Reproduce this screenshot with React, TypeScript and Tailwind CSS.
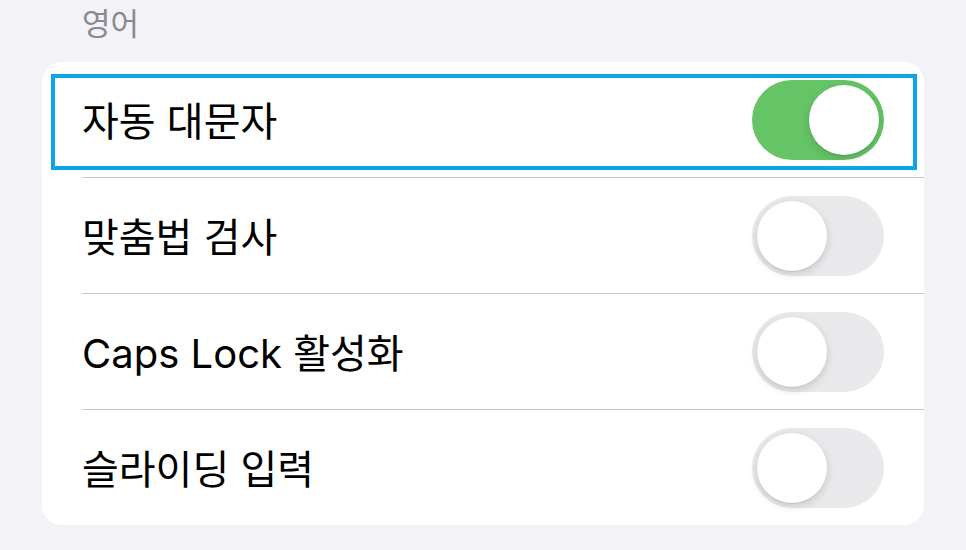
const rows = [
  { label: '자동 대문자', on: true },
  { label: '맞춤법 검사', on: false },
  { label: 'Caps Lock 활성화', on: false },
  { label: '슬라이딩 입력', on: false },
];

function Toggle({ on }: { on: boolean }) {
  return (
    <div
      className={`flex h-[80px] w-[132px] shrink-0 items-center rounded-full p-[5px] ${
        on ? 'justify-end bg-[#65c466]' : 'justify-start bg-[#e9e9eb]'
      }`}
    >
      <div className="h-[70px] w-[70px] rounded-full bg-white shadow-[0_3px_8px_rgba(0,0,0,0.15),0_1px_1px_rgba(0,0,0,0.06)]" />
    </div>
  );
}

export default function App() {
  return (
    <div
      className="h-[550px] w-[966px] overflow-hidden bg-[#f2f2f7]"
      style={{ fontFamily: 'Inter, "Noto Sans CJK KR", sans-serif' }}
    >
      <div className="h-[62px] pl-[82px] pt-[2px] text-[31px] leading-[44px] text-[#8a8a8e]">영어</div>
      <div className="relative ml-[42px] w-[882px] rounded-[20px] bg-white">
        {rows.map((row, i) => (
          <div key={i}>
            {i > 0 && <div className="ml-[40px] h-px bg-[#c8c8cc]" />}
            <div className="flex h-[115px] items-center justify-between pl-[40px] pr-[40px]">
              <span className="mt-[4px] text-[40px] leading-[48px] text-black">{row.label}</span>
              <Toggle on={row.on} />
            </div>
          </div>
        ))}
        <div className="pointer-events-none absolute left-[9px] top-[12px] h-[96px] w-[866px] border-[4px] border-[#0ba5ea]" />
      </div>
    </div>
  );
}
